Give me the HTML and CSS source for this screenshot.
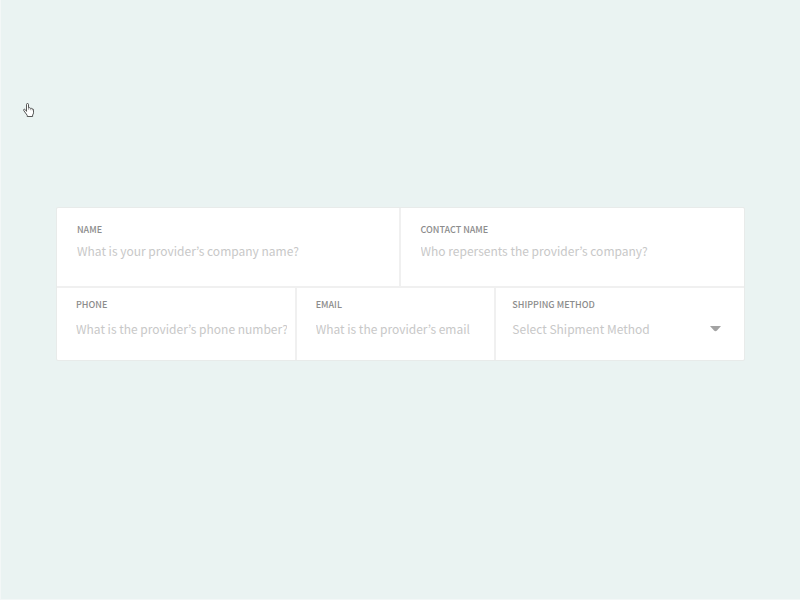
FILE: index.html
```html
<!DOCTYPE html>
<html lang="en">
<head>
  <meta charset="UTF-8">
  <meta name="viewport" content="width=device-width, initial-scale=1">
  <title>Provider</title>
  <link rel="stylesheet" href="styles.css">
</head>
<body>
  <main class="page">
    <form class="card">
      <div class="row row-top">
        <div class="field">
          <label for="name">NAME</label>
          <input type="text" id="name" placeholder="What is your provider’s company name?">
        </div>
        <div class="field">
          <label for="contact">CONTACT NAME</label>
          <input type="text" id="contact" placeholder="Who repersents the provider’s company?">
        </div>
      </div>
      <div class="row row-bottom">
        <div class="field">
          <label for="phone">PHONE</label>
          <input type="tel" id="phone" placeholder="What is the provider’s phone number?">
        </div>
        <div class="field">
          <label for="email">EMAIL</label>
          <input type="email" id="email" placeholder="What is the provider’s email">
        </div>
        <div class="field field-select">
          <label for="shipping">SHIPPING METHOD</label>
          <div class="select">
            <select id="shipping">
              <option>Select Shipment Method</option>
            </select>
            <svg class="arrow" width="11" height="6" viewBox="0 0 11 6" aria-hidden="true">
              <path d="M0 0h11L7 4.6q-1.5 1.2-3 0z" fill="#a3a3a3"/>
            </svg>
          </div>
        </div>
      </div>
    </form>
  </main>

  <svg class="pointer" width="12" height="14" viewBox="0 0 12 14" aria-hidden="true">
    <path d="M3.5 8.5V1.6q0-1.1 1-1.1t1 1.1v3.2q1.3-.5 1.8.5 1.2-.4 1.7.6 1.5-.3 1.5 1.2v2.7q0 1.2-.9 2.2v1.5H4.2v-1.2L.8 7.6Q.2 6.4 1.3 6.2q.8 0 2.2 2" fill="#fff" stroke="#444" stroke-width=".9" stroke-linejoin="round"/>
    <path d="M5.5 4.8v2M7.4 5.4v1.8M9.2 6v1.5" fill="none" stroke="#777" stroke-width=".6"/>
  </svg>
</body>
</html>
```
FILE: styles.css
```css
:root {
  --bg: #eaf3f2;
  --line: #f0f0f0;
  --label: #8c8c8c;
  --hint: #c8c8c8;
}

* {
  box-sizing: border-box;
}

body {
  margin: 0;
  font-family: "Noto Sans CJK KR", "Open Sans", sans-serif;
  background: var(--bg);
}

.page {
  display: flex;
  flex-direction: column;
  justify-content: center;
  min-height: 100vh;
  padding: 0 55px 32px;
  border-left: 1px solid #f3f7f7;
  border-bottom: 1px solid #f3f7f7;
}

.card {
  background: white;
  border: 1px solid #e8ebea;
  border-radius: 2px;
}

.row {
  display: grid;
}
.row-top {
  grid-template-columns: 1fr 1fr;
  border-bottom: 2px solid var(--line);
}
.row-bottom {
  grid-template-columns: 240fr 200fr 248fr;
}

.field {
  min-width: 0;
  padding: 13px 8px 23px 20px;
  border-right: 2px solid var(--line);
}
.field:last-child {
  border-right: none;
}
.row-bottom .field {
  padding: 8px 8px 19px 19px;
}
.row-bottom .field-select {
  padding-left: 16px;
  padding-right: 23px;
}

label {
  display: block;
  font-size: 9px;
  line-height: 18px;
  font-weight: 500;
  color: var(--label);
}

input,
select {
  display: block;
  width: 100%;
  height: 24px;
  padding: 0;
  border: none;
  outline: none;
  background: transparent;
  font-family: inherit;
  font-size: 12px;
  line-height: 24px;
  color: var(--hint);
}
input::placeholder {
  color: var(--hint);
}
.row-bottom input,
.select {
  margin-top: 3px;
}

.select {
  display: flex;
  align-items: center;
}
select {
  appearance: none;
  cursor: pointer;
}
.arrow {
  flex: none;
  pointer-events: none;
}

.pointer {
  position: absolute;
  top: 103px;
  left: 23px;
}
```
